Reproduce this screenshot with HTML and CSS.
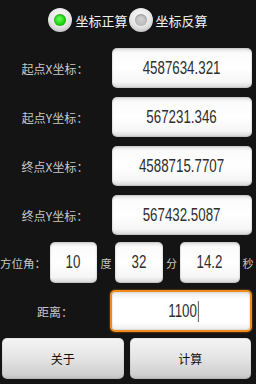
FILE: index.html
```html
<!DOCTYPE html>
<html lang="zh-CN">
<head>
    <meta charset="UTF-8">
    <title>坐标计算</title>
    <link rel="stylesheet" href="styles.css">
</head>
<body>
    <div class="screen">
        <div class="radios">
            <label class="radio checked"><span class="radio-dot"></span><span class="radio-text">坐标正算</span></label>
            <label class="radio"><span class="radio-dot"></span><span class="radio-text">坐标反算</span></label>
        </div>

        <div class="row first">
            <div class="label">起点X坐标：</div>
            <div class="field"><span class="val">4587634.321</span></div>
        </div>
        <div class="row">
            <div class="label">起点Y坐标：</div>
            <div class="field"><span class="val">567231.346</span></div>
        </div>
        <div class="row">
            <div class="label">终点X坐标：</div>
            <div class="field"><span class="val">4588715.7707</span></div>
        </div>
        <div class="row">
            <div class="label">终点Y坐标：</div>
            <div class="field"><span class="val">567432.5087</span></div>
        </div>

        <div class="row azimuth">
            <div class="label-left">方位角：</div>
            <div class="field small deg"><span class="val">10</span></div>
            <div class="unit u-deg">度</div>
            <div class="field small min"><span class="val">32</span></div>
            <div class="unit u-min">分</div>
            <div class="field small sec"><span class="val">14.2</span></div>
            <div class="unit u-sec">秒</div>
        </div>

        <div class="row distance">
            <div class="label">距离：</div>
            <div class="field focused"><span class="val caret">1100</span></div>
        </div>

        <div class="buttons">
            <div class="btn">关于</div>
            <div class="btn">计算</div>
        </div>
    </div>
</body>
</html>
```

FILE: styles.css
```css
body{
    margin: 0;
    background: #141414;
    font-family: "Noto Sans CJK SC", "Noto Sans", sans-serif;
}
.screen{
    width: 256px;
    height: 384px;
    overflow: hidden;
}
.radios{
    height: 40px;
    display: flex;
    align-items: center;
    justify-content: center;
    padding-left: 1px;
}
.radio{
    display: flex;
    align-items: center;
    margin-right: 1px;
}
.radio-dot{
    width: 24px;
    height: 24px;
    border-radius: 50%;
    background: radial-gradient(circle at 50% 35%, #fafafa 0%, #e4e4e4 55%, #a8a8a8 100%);
    position: relative;
    box-shadow: 0 0 1px #000;
}
.radio-dot:after{
    content: "";
    position: absolute;
    left: 6px;
    top: 6px;
    width: 12px;
    height: 12px;
    border-radius: 50%;
    background: radial-gradient(circle at 50% 40%, #d0d0d0, #b4b4b4);
    box-shadow: inset 0 1px 2px rgba(0,0,0,.25);
}
.radio.checked .radio-dot:after{
    background: radial-gradient(circle at 45% 40%, #6cff5c 0%, #1ed414 55%, #0d9a08 100%);
}
.radio-text{
    margin-left: 3px;
    font-size: 13px;
    color: #f2f2f2;
}
.row{
    display: flex;
    align-items: center;
    margin-top: 9px;
}
.row.first{
    margin-top: 8px;
}
.label{
    width: 110px;
    margin-right: 2px;
    text-align: center;
    font-size: 12px;
    color: #c8c8c8;
}
.field{
    width: 140px;
    height: 40px;
    box-sizing: border-box;
    border-radius: 5px;
    background: linear-gradient(#dedede, #fbfbfb 12%, #ffffff 50%, #f6f6f6 85%, #d6d6d6);
    box-shadow: inset 0 0 2px rgba(0,0,0,.35);
    display: flex;
    align-items: center;
    justify-content: center;
    font-family: "Liberation Sans", sans-serif;
    font-size: 18px;
    color: #2e2e2e;
}
.val{
    display: inline-block;
    transform: scaleX(.74);
}
.azimuth{
    margin-top: 7px;
}
.label-left{
    width: 50px;
    font-size: 11.5px;
    color: #c8c8c8;
}
.field.small{
    height: 41px;
}
.field.deg{
    width: 47px;
}
.field.min{
    width: 48px;
}
.field.sec{
    width: 60px;
}
.unit{
    text-align: center;
    font-size: 11px;
    color: #c8c8c8;
}
.u-deg{
    width: 18px;
}
.u-min{
    width: 17px;
}
.u-sec{
    width: 16px;
}
.distance{
    margin-top: 7px;
}
.distance .label{
    width: 110px;
    margin-right: 0;
}
.field.focused{
    width: 142px;
    height: 42px;
    border: 2px solid #ef8a1e;
    box-shadow: 0 0 2px #c06a10, inset 0 0 2px rgba(0,0,0,.25);
    background: linear-gradient(#eaeaea, #ffffff 20%, #ffffff 80%, #ededed);
}
.caret{
    border-right: 1px solid #222;
    padding-right: 1px;
    margin-left: 4px;
}
.buttons{
    display: flex;
    gap: 6px;
    margin: 6px 5px 0 2px;
}
.btn{
    flex: 1;
    height: 41px;
    border-radius: 5px;
    background: linear-gradient(#f4f4f4, #e6e6e6 45%, #cfcfcf 90%, #bdbdbd);
    box-shadow: inset 0 0 1px rgba(0,0,0,.5);
    display: flex;
    align-items: center;
    justify-content: center;
    font-size: 12px;
    color: #111;
}
```
